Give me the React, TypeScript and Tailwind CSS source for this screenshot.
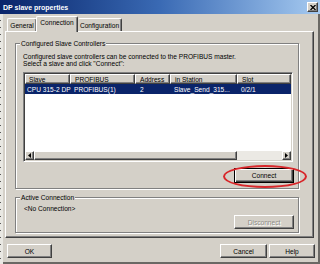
import React from 'react';

const cols = [
  { label: 'Slave', w: 'w-[45px] pl-[3px]', cell: 'w-[45px] pl-[2px]', value: 'CPU 315-2 DP' },
  { label: 'PROFIBUS', w: 'w-[65px] pl-[4px]', cell: 'w-[65px] pl-[4px]', value: 'PROFIBUS(1)' },
  { label: 'Address', w: 'w-[35px] pl-[4px]', cell: 'w-[35px] pl-[5px]', value: '2' },
  { label: 'in Station', w: 'w-[67px] pl-[4px]', cell: 'w-[67px] pl-[4px]', value: 'Slave_Send_315...' },
  { label: 'Slot', w: 'flex-1 pl-[4px]', cell: 'flex-1 pl-[4px]', value: '0/2/1' },
];

// classic 3D raised edge
const raised =
  'bg-[#d4d0c8] border border-t-white border-l-white border-r-[#404040] border-b-[#404040] shadow-[inset_-1px_-1px_0_#808080]';

const Btn = ({
  label,
  className = '',
  disabled = false,
  isDefault = false,
}: {
  label: string;
  className?: string;
  disabled?: boolean;
  isDefault?: boolean;
}) => (
  <div
    className={`flex items-center justify-center ${
      isDefault
        ? 'bg-[#d4d0c8] border border-black shadow-[inset_1px_1px_0_#fff,inset_-1px_-1px_0_#404040,inset_-2px_-2px_0_#808080]'
        : raised
    } ${className}`}
  >
    <span className={disabled ? 'text-[#8c8a85] [text-shadow:1px_1px_0_#fff]' : 'text-black'}>{label}</span>
  </div>
);

const Group = ({ title, className = '', children }: { title: string; className?: string; children: React.ReactNode }) => (
  <div className={`relative border border-[#808080] shadow-[inset_1px_1px_0_#fff,1px_1px_0_#fff] ${className}`}>
    <span className="absolute -top-[4px] left-[4px] bg-[#d4d0c8] px-[1px] leading-[7px] whitespace-nowrap">{title}</span>
    {children}
  </div>
);

const Arrow = ({ dir }: { dir: 'left' | 'right' }) => (
  <svg width="3" height="5" viewBox="0 0 3 5">
    <path d={dir === 'left' ? 'M3 0 L0 2.5 L3 5 Z' : 'M0 0 L3 2.5 L0 5 Z'} fill="#000" />
  </svg>
);

const App: React.FC = () => {
  return (
    <div className="w-[320px] h-[264px] overflow-hidden bg-[#d4d0c8] flex flex-col text-[6.6px] leading-[7px] text-black font-['Liberation_Sans',Arial,sans-serif]">
      {/* Title bar */}
      <div className="h-[14px] shrink-0 flex items-center justify-between bg-linear-to-r from-[#0a246a] via-[#3a6ab4] to-[#a6caf0] pl-[3px] pr-[2px]">
        <span className="text-white font-bold text-[7px] leading-[9px]">DP slave properties</span>
        <div className={`w-[11px] h-[10px] flex items-center justify-center ${raised}`}>
          <svg width="6" height="5" viewBox="0 0 6 5">
            <path d="M0.5 0 L5.5 5 M5.5 0 L0.5 5" stroke="#000" strokeWidth="1.3" />
          </svg>
        </div>
      </div>

      <div className="flex flex-1">
        {/* frame strip */}
        <div className="w-[3px] shrink-0 bg-[#e9e8e3] flex justify-start">
          <div className="w-[1px] h-full bg-[repeating-linear-gradient(to_bottom,transparent_0_6px,#5a5a5a_6px_7px)]" />
        </div>

        <div className="flex-1 flex flex-col pl-[2px] pr-[3px] border-r-2 border-b-2 border-[#6a6864]">
          {/* Tabs */}
          <div className="h-[17px] shrink-0 flex items-end pl-[2px]">
            <div className="w-[30px] h-[13px] flex items-center justify-center border-t border-l border-white rounded-t-[2px] border-r border-r-[#404040] shadow-[inset_-1px_0_0_#808080]">
              General
            </div>
            <div className="relative z-10 w-[42px] h-[16px] -mb-[1px] -ml-[1px] flex items-start pt-[2px] justify-center bg-[#d4d0c8] border-t border-l border-white rounded-t-[2px] border-r border-r-[#404040] shadow-[inset_-1px_0_0_#808080]">
              Connection
            </div>
            <div className="w-[44px] h-[13px] flex items-center justify-center border-t border-white rounded-t-[2px] border-r border-r-[#404040] shadow-[inset_-1px_0_0_#808080]">
              Configuration
            </div>
          </div>

          {/* Tab panel */}
          <div className="w-[309px] h-[207px] shrink-0 flex flex-col pt-[11px] pl-[9px] border border-t-white border-l-white border-r-[#404040] border-b-[#404040] shadow-[inset_-1px_-1px_0_#808080]">
            <Group title="Configured Slave Controllers" className="w-[284px] h-[146px] flex flex-col pt-[9px] pl-[7px] pr-[4px]">
              <p className="whitespace-nowrap">Configured slave controllers can be connected to the PROFIBUS master.</p>
              <p className="whitespace-nowrap">Select a slave and click "Connect":</p>

              {/* List view */}
              <div className="mt-[5px] w-[270px] h-[90px] p-[1px] flex flex-col bg-white border border-t-[#808080] border-l-[#808080] border-r-white border-b-white shadow-[inset_1px_1px_0_#404040,inset_-1px_-1px_0_#d4d0c8]">
                <div className="h-[10px] flex shrink-0">
                  {cols.map((c) => (
                    <div key={c.label} className={`${c.w} h-[10px] flex items-center ${raised} border-l-white`}>
                      {c.label}
                    </div>
                  ))}
                </div>
                <div className="h-[10px] flex shrink-0 bg-[#0a246a] text-white">
                  {cols.map((c) => (
                    <div key={c.label} className={`${c.cell} flex items-center whitespace-nowrap`}>
                      {c.value}
                    </div>
                  ))}
                </div>
                <div className="flex-1" />
                {/* horizontal scrollbar */}
                <div className="h-[9px] flex shrink-0 bg-[#ebe9e4]">
                  <div className={`w-[9px] flex items-center justify-center ${raised}`}>
                    <Arrow dir="left" />
                  </div>
                  <div className={`w-[203px] ${raised}`} />
                  <div className="flex-1" />
                  <div className={`w-[9px] flex items-center justify-center ${raised}`}>
                    <Arrow dir="right" />
                  </div>
                </div>
              </div>

              <div className="mt-[6px] flex justify-end">
                <div className="relative">
                  <Btn label="Connect" isDefault className="w-[60px] h-[15px]" />
                  <div className="absolute -left-[11px] -right-[13px] -top-[3px] -bottom-[5px] rounded-[50%] border-2 border-[#d8262a]" />
                </div>
              </div>
            </Group>

            <Group title="Active Connection" className="mt-[8px] w-[284px] h-[36px] flex flex-col pt-[7px] pl-[8px] pr-[4px]">
              <p className="whitespace-nowrap">&lt;No Connection&gt;</p>
              <div className="mt-[3px] flex justify-end">
                <Btn label="Disconnect" disabled className="w-[60px] h-[14px]" />
              </div>
            </Group>
          </div>

          {/* Dialog buttons */}
          <div className="mt-[6px] h-[14px] flex justify-between pl-[2px]">
            <Btn label="OK" className="w-[45px] h-[14px]" />
            <div className="flex gap-[2px]">
              <Btn label="Cancel" className="w-[47px] h-[14px]" />
              <Btn label="Help" className="w-[46px] h-[14px]" />
            </div>
          </div>
        </div>
      </div>
    </div>
  );
};

export default App;
